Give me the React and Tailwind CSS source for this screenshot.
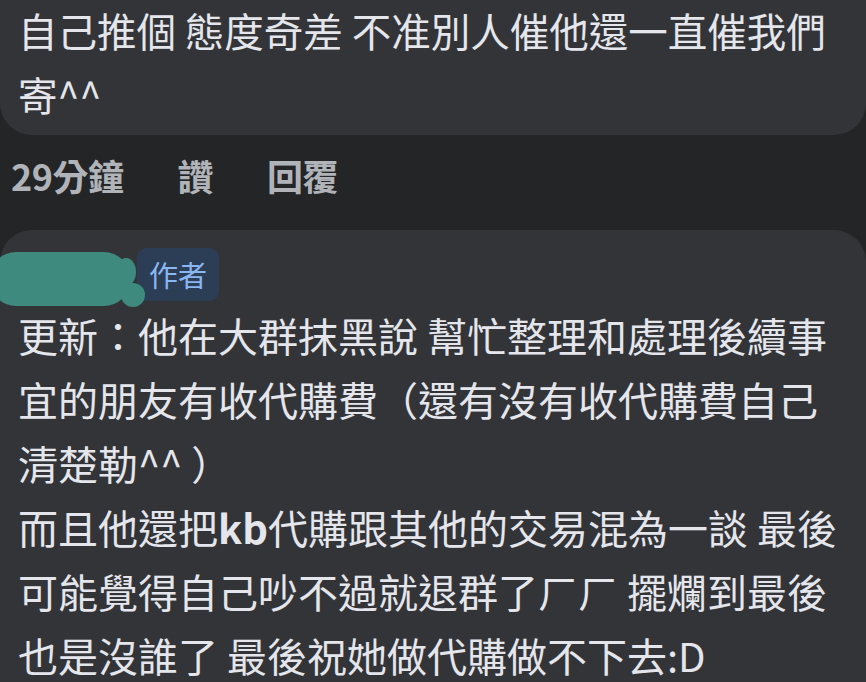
export default function App() {
  const font = { fontFamily: '"Noto Sans CJK TC", "Noto Sans", sans-serif' };
  const lines2 = [
    '更新：他在大群抹黑說 幫忙整理和處理後續事',
    '宜的朋友有收代購費（還有沒有收代購費自己',
    '清楚勒^^ ）',
  ];
  return (
    <div className="w-[866px] h-[682px] overflow-hidden bg-[#242527] text-[#e4e6eb]" style={font}>
      <div className="bg-[#333438] rounded-b-[32px] pl-[18px] pr-4 pb-[9px] -mt-[2px] text-[39.5px] leading-[64px]">
        <div>自己推個 態度奇差 不准別人催他還一直催我們</div>
        <div>寄^^</div>
      </div>

      <div className="flex items-center h-[80px] pl-[11px] text-[36px] font-bold text-[#b0b3b8] tracking-[-0.5px]">
        <span>29分鐘</span>
        <span className="ml-[54px]">讚</span>
        <span className="ml-[54px]">回覆</span>
      </div>

      <div className="mt-[15px] bg-[#333438] rounded-t-[32px] pt-[18px] pl-[18px] pr-4">
        <div className="flex items-start -ml-[18px] h-[55px]">
          {/* scribbled-out name */}
          <svg width="146" height="62" viewBox="0 0 146 62" className="relative z-10 shrink-0">
            <g fill="#3f8a7e">
              <rect x="-10" y="4" width="140" height="54" rx="26" />
              <ellipse cx="126" cy="24" rx="10" ry="14" />
              <circle cx="133" cy="47" r="12" />
            </g>
          </svg>
          <div className="-ml-[9px] h-[53px] px-[12px] rounded-[10px] bg-[#2c3e55] text-[#8ab6f2] text-[29px] leading-[53px]">
            作者
          </div>
        </div>
        <div className="text-[40px] leading-[64px]">
          {lines2.map((l) => (
            <div key={l} className="whitespace-nowrap">{l}</div>
          ))}
          <div className="whitespace-nowrap">
            而且他還把<span className="font-bold">kb</span>代購跟其他的交易混為一談 最後
          </div>
          <div className="whitespace-nowrap">可能覺得自己吵不過就退群了ㄏㄏ 擺爛到最後</div>
          <div className="whitespace-nowrap">也是沒誰了 最後祝她做代購做不下去:D</div>
        </div>
      </div>
    </div>
  );
}
